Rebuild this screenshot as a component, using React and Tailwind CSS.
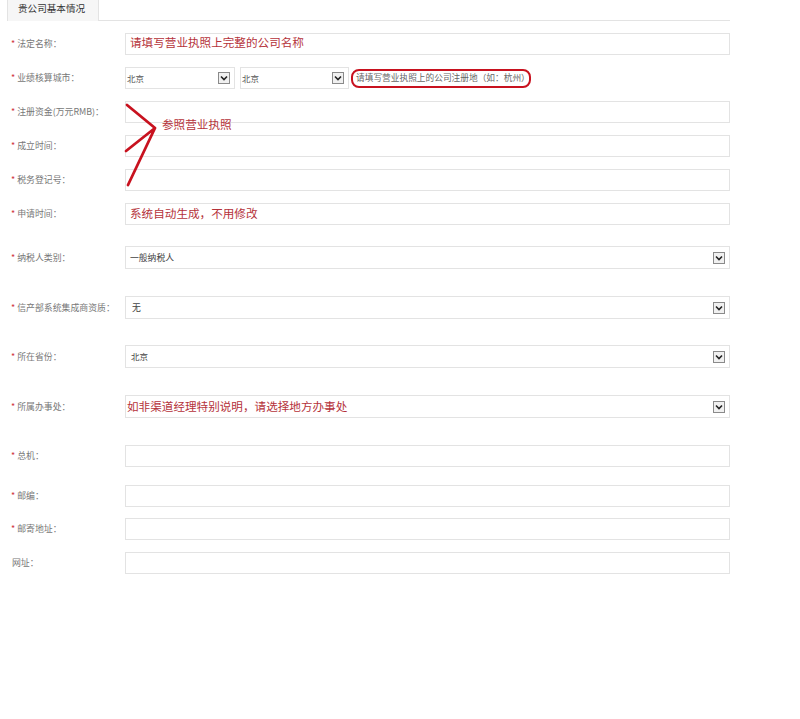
import React from "react";

const FONT = { fontFamily: '"Noto Sans CJK SC", "Noto Sans", sans-serif' };

function Arrow() {
  return (
    <span className="absolute right-[4px] top-1/2 -translate-y-1/2 w-[12px] h-[12px] border border-[#8a8a8a] bg-[#f0f0f0] flex items-center justify-center">
      <svg width="8" height="6" viewBox="0 0 8 6">
        <path d="M1 1.5 L4 4.5 L7 1.5" fill="none" stroke="#222" strokeWidth="1.6" />
      </svg>
    </span>
  );
}

function Label({ text, req = true }) {
  return (
    <div className="w-[125px] shrink-0 pl-[11px] flex items-center text-[8.9px] text-[#777]">
      {req && <span className="text-[#d0313a] mr-[2px]">*</span>}
      {!req && <span className="w-[1px]" />}
      <span>{text}</span>
    </div>
  );
}

function Box({ children, select, className = "" }) {
  return (
    <div className={`relative h-[22px] border border-[#e3e3e3] bg-white flex items-center ${className}`}>
      {children}
      {select && <Arrow />}
    </div>
  );
}

function Row({ label, req, mt, children }) {
  return (
    <div className={`flex items-center ${mt}`}>
      <Label text={label} req={req} />
      {children}
    </div>
  );
}

const red = "text-[#b5323a] text-[11.6px]";

export default function App() {
  return (
    <div className="relative w-[800px] h-[719px] bg-white" style={FONT}>
      <div className="ml-[7px] w-[723px] h-[21px] border-b border-[#e3e3e3] flex">
        <div className="w-[92px] h-[21px] bg-[#f6f6f6] border-l border-r border-[#e3e3e3] flex items-center pl-[10px] pb-[4px] text-[9.6px] text-[#333]">
          贵公司基本情况
        </div>
      </div>

      <div className="flex flex-col">
        <Row label="法定名称：" mt="mt-[12px]">
          <Box className="w-[605px]">
            <span className={`${red} pl-[4px] -mt-[2px]`}>请填写营业执照上完整的公司名称</span>
          </Box>
        </Row>
        <Row label="业绩核算城市：" mt="mt-[12px]">
          <div className="flex items-center">
            <Box select className="w-[110px]">
              <span className="text-[8.5px] text-[#555] pl-[1px]">北京</span>
            </Box>
            <Box select className="w-[109px] ml-[5px]">
              <span className="text-[8.5px] text-[#555] pl-[1px]">北京</span>
            </Box>
            <div className="ml-[2px] w-[180px] h-[19px] border-2 border-[#c8121f] rounded-[8px] flex items-center pl-[3px] text-[8.7px] text-[#666] whitespace-nowrap">
              请填写营业执照上的公司注册地（如：杭州）
            </div>
          </div>
        </Row>
        <Row label="注册资金(万元RMB)：" mt="mt-[12px]">
          <Box className="w-[605px]" />
        </Row>
        <Row label="成立时间：" mt="mt-[12px]">
          <Box className="w-[605px]" />
        </Row>
        <Row label="税务登记号：" mt="mt-[12px]">
          <Box className="w-[605px]" />
        </Row>
        <Row label="申请时间：" mt="mt-[12px]">
          <Box className="w-[605px]">
            <span className={`${red} pl-[4px]`}>系统自动生成，不用修改</span>
          </Box>
        </Row>
        <Row label="纳税人类别：" mt="mt-[21px]">
          <Box select className="w-[605px] h-[23px]">
            <span className="text-[8.8px] text-[#444] pl-[4px]">一般纳税人</span>
          </Box>
        </Row>
        <Row label="信产部系统集成商资质：" mt="mt-[27px]">
          <Box select className="w-[605px] h-[23px]">
            <span className="text-[8.8px] text-[#444] pl-[6px]">无</span>
          </Box>
        </Row>
        <Row label="所在省份：" mt="mt-[26px]">
          <Box select className="w-[605px] h-[23px]">
            <span className="text-[8.5px] text-[#444] pl-[5px]">北京</span>
          </Box>
        </Row>
        <Row label="所属办事处：" mt="mt-[27px]">
          <Box select className="w-[605px] h-[23px]">
            <span className={`${red} pl-[1px]`}>如非渠道经理特别说明，请选择地方办事处</span>
          </Box>
        </Row>
        <Row label="总机：" mt="mt-[27px]">
          <Box className="w-[605px]" />
        </Row>
        <Row label="邮编：" mt="mt-[18px]">
          <Box className="w-[605px]" />
        </Row>
        <Row label="邮寄地址：" mt="mt-[11px]">
          <Box className="w-[605px]" />
        </Row>
        <Row label="网址：" req={false} mt="mt-[12px]">
          <Box className="w-[605px]" />
        </Row>
      </div>

      <svg className="absolute left-0 top-0 pointer-events-none" width="800" height="719">
        <path d="M127 105 L155 128 L126 151 M155 128 L128 185" fill="none" stroke="#c8121f" strokeWidth="2.8" strokeLinecap="round" strokeLinejoin="round" />
      </svg>
      <div className={`absolute left-[162px] top-[116px] ${red}`}>参照营业执照</div>
    </div>
  );
}
